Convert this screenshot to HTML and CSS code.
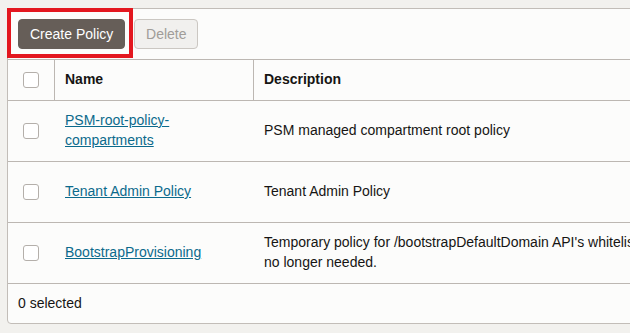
FILE: index.html
```html
<!DOCTYPE html>
<html>
<head>
<title>Policies</title>
<link rel="stylesheet" href="styles.css">
</head>
<body>
    <div class="panel">
        <div class="toolbar">
            <div class="highlight">
                <button class="btn btn-primary">Create Policy</button>
            </div>
            <button class="btn btn-disabled">Delete</button>
        </div>
        <div class="grid">
            <div class="head cell-check"><span class="checkbox"></span></div>
            <div class="head divided">Name</div>
            <div class="head divided">Description</div>

            <div class="row cell-check"><span class="checkbox"></span></div>
            <div class="row"><a href="#" class="link">PSM-root-policy-<br>compartments</a></div>
            <div class="row">PSM managed compartment root policy</div>

            <div class="row cell-check"><span class="checkbox"></span></div>
            <div class="row"><a href="#" class="link">Tenant Admin Policy</a></div>
            <div class="row">Tenant Admin Policy</div>

            <div class="row cell-check"><span class="checkbox"></span></div>
            <div class="row"><a href="#" class="link">BootstrapProvisioning</a></div>
            <div class="row nowrap">Temporary policy for /bootstrapDefaultDomain API's whitelisting. Can be deleted when it is<br>no longer needed.</div>
        </div>
        <div class="footer">0 selected</div>
    </div>
</body>
</html>
```

FILE: styles.css
```css
* {
    box-sizing: border-box;
}

body {
    font-family: 'Liberation Sans', Arial, sans-serif;
    font-size: 14px;
    background-color: #f2f1ee;
    color: #161513;
    margin: 0;
    padding: 8px 0 0 7px;
    overflow: hidden;
}

.panel {
    width: 900px;
    background-color: #fcfcfb;
    border: 1px solid #c2bdb8;
    border-radius: 0 0 4px 4px;
}

.toolbar {
    height: 50px;
    display: flex;
    align-items: flex-start;
}

.highlight {
    margin: -1px 0 0 -1px;
    padding: 7px 4px 5px 7px;
    border: 4px solid #e3171f;
}

.btn {
    height: 30px;
    font-family: inherit;
    font-size: 14px;
    border-radius: 4px;
    white-space: nowrap;
    padding: 0 11px 1px;
}

.btn-primary {
    background-color: #665e58;
    border: 1px solid #665e58;
    color: #ffffff;
}

.btn-disabled {
    margin: 10px 0 0 1px;
    padding: 0 10px 1px;
    width: 64px;
    background-color: #f1f0ee;
    border: 1px solid #cbc7c2;
    color: #a09d99;
}

.grid {
    display: grid;
    grid-template-columns: 46px 199px 1fr;
}

.head {
    height: 42px;
    display: flex;
    align-items: center;
    padding: 0 10px 2px;
    font-weight: bold;
    border-top: 1px solid #bcb7b2;
    border-bottom: 1px solid #bcb7b2;
}

.divided {
    border-left: 1px solid #bcb7b2;
}

.row {
    height: 61px;
    display: flex;
    align-items: center;
    padding: 0 10px 2px 11px;
    line-height: 20px;
    border-bottom: 1px solid #bcb7b2;
}

.cell-check {
    justify-content: center;
    padding: 0;
}

.checkbox {
    width: 16px;
    height: 16px;
    border: 1px solid #b4afaa;
    border-radius: 3px;
    background-color: #ffffff;
}

.link {
    color: #0b6a8c;
    text-decoration: underline;
}

.nowrap {
    white-space: nowrap;
}

.footer {
    height: 39px;
    display: flex;
    align-items: center;
    padding: 0 0 2px 10px;
}
```
